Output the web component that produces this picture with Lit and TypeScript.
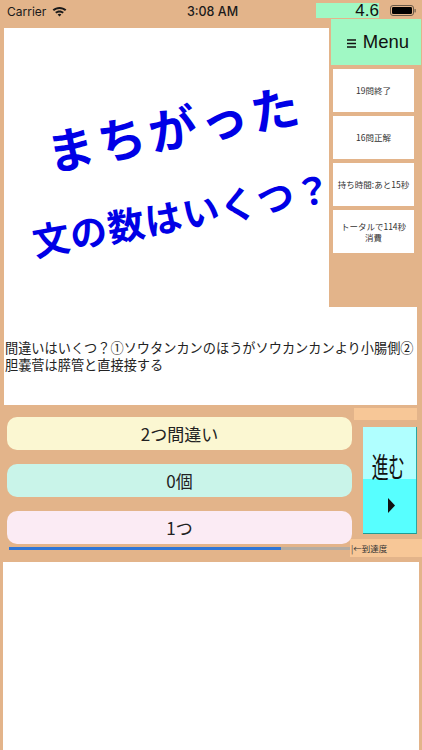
import { LitElement, html, css } from "lit";
import { customElement } from "lit/decorators.js";

@customElement("app-root")
export class AppRoot extends LitElement {
  static styles = css`
    :host {
      display: block;
      width: 422px;
      height: 750px;
      overflow: hidden;
      background: #e3b48a;
      color: #111;
      font-family: "Liberation Sans", "Noto Sans CJK JP", sans-serif;
    }
    .page { position: relative; display: flex; flex-direction: column; height: 750px; }
    .status {
      height: 28px;
      display: grid;
      grid-template-columns: 1fr auto 1fr;
      align-items: center;
      padding: 0 6px 6px 7px;
      box-sizing: border-box;
      font-family: "Inter", "Liberation Sans", sans-serif;
      font-size: 12px;
      color: #1a1a1a;
    }
    .status-left { display: flex; align-items: center; gap: 6px; }
    .time { font-weight: 500; font-size: 12.5px; margin-left: 2px; }
    .rating {
      position: absolute;
      left: 316px;
      top: 3px;
      width: 63px;
      height: 15px;
      background: #a0f8c4;
      text-align: right;
      font-size: 17px;
      line-height: 16px;
      font-family: "Liberation Sans", sans-serif;
      color: #111;
    }
    .battery { position: absolute; left: 390px; top: 5px; }
    .top { display: flex; height: 279px; }
    .quiz {
      margin-left: 4px;
      width: 325px;
      background: #fff;
      display: flex;
      flex-direction: column;
      align-items: center;
      color: #0000e6;
      font-family: "Noto Sans CJK JP", sans-serif;
      font-weight: 700;
      white-space: nowrap;
    }
    .line1 { font-size: 48px; line-height: 60px; margin: 68px 0 0 16px; transform: rotate(-11deg); letter-spacing: 4px; }
    .line2 { font-size: 37px; line-height: 50px; margin: 32px 0 0 30px; transform: rotate(-10.5deg); letter-spacing: 1px; }
    .side { margin: -9px 0 0 2px; width: 90px; display: flex; flex-direction: column; }
    .menu {
      height: 46px;
      padding-left: 4px;
      background: #a0f8c4;
      display: flex;
      align-items: center;
      justify-content: center;
      gap: 7px;
      font-size: 18.5px;
      color: #111;
    }
    .menu svg { margin-top: 3px; }
    .stats { display: flex; flex-direction: column; gap: 4px; margin: 4px 0 0 2px; width: 81px; }
    .stat {
      height: 43px;
      background: #fff;
      display: flex;
      align-items: center;
      justify-content: center;
      text-align: center;
      font-family: "Noto Sans CJK JP", sans-serif;
      font-size: 8.5px;
      line-height: 11px;
      color: #333;
      padding: 0 2px;
      box-sizing: border-box;
    }
    .question {
      margin-left: 4px;
      padding-left: 1px;
      width: 413px;
      height: 98px;
      box-sizing: border-box;
      background: #fff;
      display: flex;
      align-items: center;
      font-family: "Noto Sans CJK JP", sans-serif;
      font-size: 13.2px;
      line-height: 17.5px;
      color: #222;
    }
    .question span { display: block; }
    .answers-row { display: flex; height: 131px; margin-top: 3px; }
    .answers {
      position: relative;
      z-index: 1;
      display: flex;
      flex-direction: column;
      gap: 14px;
      margin: 9px 0 0 7px;
      width: 345px;
    }
    .answer {
      flex: none;
      height: 33px;
      border-radius: 10px;
      display: flex;
      align-items: center;
      justify-content: center;
      font-family: "Noto Sans CJK JP", sans-serif;
      font-size: 17px;
      color: #222;
    }
    .a1 { background: #fbf7d2; }
    .a2 { background: #c9f4e9; }
    .a3 { background: #fbebf4; }
    .next-col { display: flex; flex-direction: column; margin-left: 2px; width: 63px; }
    .strip { flex: none; height: 12px; background: #f7c797; }
    .next {
      flex: none;
      margin: 7px 0 0 9px;
      width: 54px;
      height: 107px;
      box-sizing: border-box;
      background: linear-gradient(#b0ffff 0 49%, #57ffff 49% 100%);
      border-right: 1px solid #2ca6a0;
      border-bottom: 1px solid #1e9c94;
      display: flex;
      flex-direction: column;
      align-items: center;
      font-family: "Noto Sans CJK JP", sans-serif;
      font-size: 28px;
      color: #111;
    }
    .next .word { line-height: 40px; margin: 19px 3px 0 0; letter-spacing: -1px; white-space: nowrap; transform: scaleX(0.6); }
    .next svg { margin: 12px 0 0 3px; }
    .progress-row { display: flex; align-items: center; height: 18px; }
    .track { margin-left: 9px; width: 341px; height: 3px; margin-top: 1px; background: #b4aca2; }
    .fill { height: 100%; background: #2f76d6; }
    .label {
      width: 71px;
      height: 18px;
      padding-left: 1px;
      background: #f7c797;
      font-family: "Noto Sans CJK JP", sans-serif;
      font-size: 8.5px;
      line-height: 18px;
      color: #333;
      white-space: nowrap;
    }
    .notes { margin: 5px 0 0 3px; width: 416px; flex: 1; background: #fff; }
  `;

  render() {
    const progress = 272 / 341;
    return html`
      <div class="page">
        <div class="status">
          <div class="status-left">
            <span>Carrier</span>
            <svg width="15" height="11" viewBox="0 0 15 11">
              <path d="M0.6 3.6C4.4 0 10.6 0 14.4 3.6L13 5.1C10 2.3 5 2.3 2 5.1Z" fill="#1a1a1a"/>
              <path d="M3.1 6.1C5.5 3.9 9.5 3.9 11.9 6.1L10.5 7.6C8.9 6.2 6.1 6.2 4.5 7.6Z" fill="#1a1a1a"/>
              <path d="M5.6 8.5C6.7 7.6 8.3 7.6 9.4 8.5L7.5 10.6Z" fill="#1a1a1a"/>
            </svg>
          </div>
          <span class="time">3:08 AM</span>
          <span></span>
        </div>
        <div class="rating">4.6</div>
        <svg class="battery" width="27" height="12" viewBox="0 0 27 12">
          <rect x="0.5" y="0.5" width="23" height="10" rx="2.5" fill="none" stroke="#6a5a48"/>
          <rect x="2" y="2" width="20" height="7" rx="1.2" fill="#000"/>
          <rect x="24.5" y="4" width="1.2" height="3.4" fill="#6a5a48"/>
        </svg>
        <div class="top">
          <div class="quiz">
            <div class="line1">まちがった</div>
            <div class="line2">文の数はいくつ？</div>
          </div>
          <div class="side">
            <div class="menu">
              <svg width="9" height="9" viewBox="0 0 9 9">
                <path d="M0 1h9M0 4.5h9M0 8h9" stroke="#111" stroke-width="1.4"/>
              </svg>
              <span>Menu</span>
            </div>
            <div class="stats">
              <div class="stat">19問終了</div>
              <div class="stat">16問正解</div>
              <div class="stat">持ち時間:あと15秒</div>
              <div class="stat">トータルで114秒<br />消費</div>
            </div>
          </div>
        </div>
        <div class="question">
          <span>間違いはいくつ？①ソウタンカンのほうがソウカンカンより小腸側②胆嚢菅は膵管と直接接する</span>
        </div>
        <div class="answers-row">
          <div class="answers">
            <div class="answer a1">2つ間違い</div>
            <div class="answer a2">0個</div>
            <div class="answer a3">1つ</div>
          </div>
          <div class="next-col">
            <div class="strip"></div>
            <div class="next">
              <span class="word">進む</span>
              <svg width="7" height="15" viewBox="0 0 7 15"><path d="M0 0L7 7.5L0 15Z" fill="#111"/></svg>
            </div>
          </div>
        </div>
        <div class="progress-row">
          <div class="track"><div class="fill" style="width:${progress * 100}%"></div></div>
          <div class="label">|←到達度</div>
        </div>
        <div class="notes"></div>
      </div>
    `;
  }
}
